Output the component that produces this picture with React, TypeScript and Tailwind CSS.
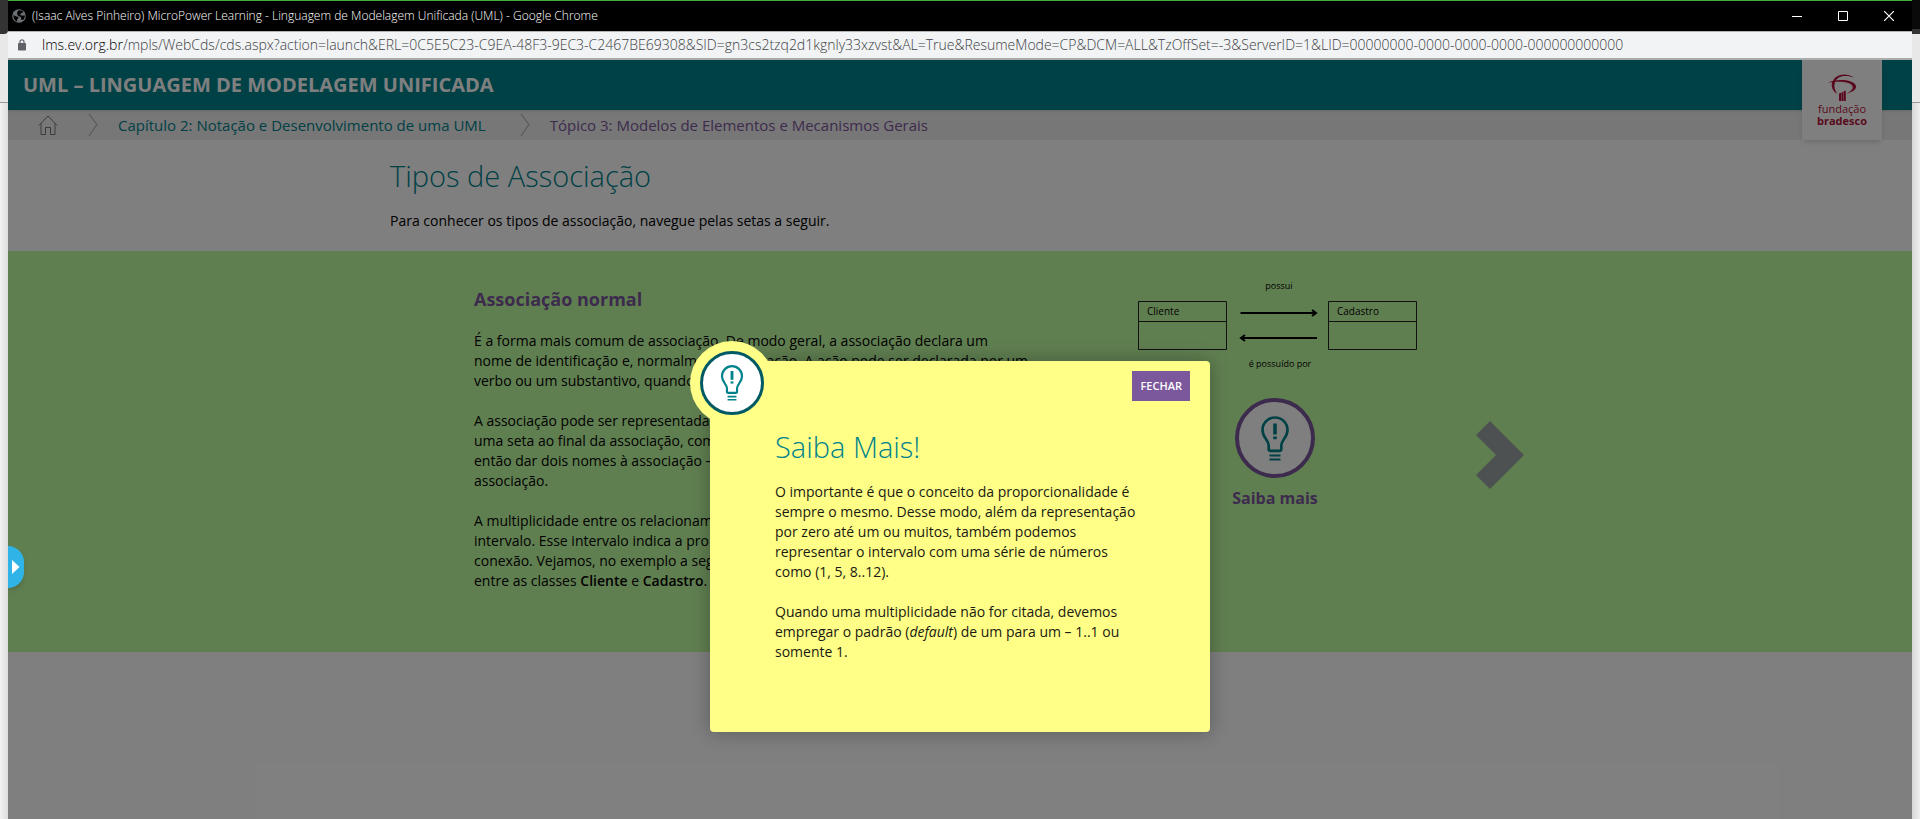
import { ReactNode } from "react";

function BulbIcon({ className }: { className: string }) {
  return (
    <svg viewBox="0 0 28 45" fill="none" stroke="currentColor" className={className} aria-hidden="true">
      <path
        d="M14 1.500a12.500 12.500 0 0 1 12.500 12.500c0 8-6.200 9.500-6.200 15.500v3.500q0 1.800-1.800 1.800h-9q-1.800 0-1.800-1.800v-3.500C7.700 23.500 1.500 22 1.500 14A12.500 12.500 0 0 1 14 1.500z"
        strokeWidth="2.700"
        strokeLinejoin="round"
      />
      <path d="M14 7.500v11" strokeWidth="3.600" />
      <path d="M14 20.500v2.700" strokeWidth="3.600" />
      <path d="M8.500 39.500h11M8.500 43.500h11" strokeWidth="2" />
    </svg>
  );
}

function CrumbArrow() {
  return (
    <svg viewBox="0 0 10 24" className="h-6 w-2.5 shrink-0" fill="none" stroke="#a0a0a0" aria-hidden="true">
      <path d="M1 1l8 10.500L1 23" />
    </svg>
  );
}

function TitleBar() {
  return (
    <div className="flex h-8 items-center border-t border-b border-t-[#3fae3f] border-b-[#b0b0b0] bg-black pl-1 text-white">
      <svg viewBox="0 0 14 14" className="size-3.5 shrink-0" aria-hidden="true">
        <circle cx="7" cy="7" r="6.800" fill="#6b7075" />
        <path d="M1.600 6l2.400 1.500 2.500.2-.5 2-1 .5v2.500C2.500 11.500 1 9 1.600 6zM6 1.500h4l1.500 2-2 .2L8 6l3 .8 1.600-.5.2 1.700-1.600 3-2-.5L9 8 6 6.800 5 4.500z" fill="#000" />
      </svg>
      <h1 className="ml-1.5 grow truncate text-xs font-light text-white">
        (Isaac Alves Pinheiro) MicroPower Learning - Linguagem de Modelagem Unificada (UML) - Google Chrome
      </h1>
      <div className="flex h-full">
        <button type="button" aria-label="Minimizar" className="flex w-[46px] items-center justify-center">
          <svg viewBox="0 0 10 10" className="size-2.5" stroke="currentColor"><path d="M0 5.500h10" /></svg>
        </button>
        <button type="button" aria-label="Maximizar" className="flex w-[46px] items-center justify-center">
          <svg viewBox="0 0 10 10" className="size-2.5" fill="none" stroke="currentColor"><path d="M.5.5h9v9h-9z" /></svg>
        </button>
        <button type="button" aria-label="Fechar janela" className="flex w-[46px] items-center justify-center">
          <svg viewBox="0 0 10 10" className="size-2.5" stroke="currentColor" strokeWidth="1.200"><path d="M0 0l10 10M10 0L0 10" /></svg>
        </button>
      </div>
    </div>
  );
}

function AddressBar() {
  return (
    <div className="flex h-7 items-center border-b-2 border-[#ababab] bg-[#f1f3f4] pl-2.5 text-sm font-light text-[#3c4043]">
      <svg viewBox="0 0 8 12" className="h-3 w-2 shrink-0" aria-hidden="true">
        <rect x="0" y="4" width="8" height="7.500" rx=".8" fill="#5f6368" />
        <path d="M2 4.500V2.800a2 2 0 0 1 4 0v1.700" fill="none" stroke="#5f6368" strokeWidth="1.200" />
      </svg>
      <span className="ml-4 truncate">
        <span className="text-black">lms.ev.org.br</span>
        /mpls/WebCds/cds.aspx?action=launch&amp;ERL=0C5E5C23-C9EA-48F3-9EC3-C2467BE69308&amp;SID=gn3cs2tzq2d1kgnly33xzvst&amp;AL=True&amp;ResumeMode=CP&amp;DCM=ALL&amp;TzOffSet=-3&amp;ServerID=1&amp;LID=00000000-0000-0000-0000-000000000000
      </span>
    </div>
  );
}

function Logo() {
  return (
    <div className="absolute top-0 right-[30px] flex size-20 flex-col items-center bg-white pt-[13px] text-[#b4143c] shadow-md">
      <svg viewBox="0 0 30 30" className="size-[30px] shrink-0" aria-hidden="true">
        <path d="M5.500 10C7 1 19-1 27 4.500 20 2 11 2 8 9z" fill="currentColor" />
        <path d="M1 9.800C8 5.500 27 6 29 13c.5 4-4 6.200-9.500 7.500 4-2 7-4.500 6-7.500C23 8.500 10 8 1 9.800z" fill="currentColor" />
        <path d="M5.500 8c-2 5 0 10.500 5 12.800-3-4-4-8-2-12.800z" fill="currentColor" />
        <path d="M12 20.500l2-.8V28h-2zM14.400 19.500l2-.8V28h-2zM16.800 18.300l2-.8V28h-2z" fill="currentColor" />
      </svg>
      <span className="text-center text-[11px] leading-3">
        fundação
        <br />
        <b>bradesco</b>
      </span>
    </div>
  );
}

function Header() {
  return (
    <header>
      <div className="relative z-10 flex h-[50px] items-center bg-[#00828c] pl-[15px] text-white shadow">
        <h2 className="text-xl font-bold">UML – LINGUAGEM DE MODELAGEM UNIFICADA</h2>
        <Logo />
      </div>
      <nav className="flex h-[30px] items-center bg-[#eeeeee] pl-[30px] text-[15px]">
        <a href="#inicio" aria-label="Início">
          <svg viewBox="0 0 20 20" className="size-5" fill="none" stroke="#777" aria-hidden="true">
            <path d="M.8 10.500L10 1l9.200 9.500M3 8.500v11h4.500V12.500h5v7H17v-11" />
          </svg>
        </a>
        <span className="ml-[30px] flex items-center"><CrumbArrow /></span>
        <a href="#capitulo-2" className="ml-5 text-[#00828c]">Capítulo 2: Notação e Desenvolvimento de uma UML</a>
        <span className="ml-[34px] flex items-center"><CrumbArrow /></span>
        <a href="#topico-3" className="ml-5 text-[#7b579b]">Tópico 3: Modelos de Elementos e Mecanismos Gerais</a>
      </nav>
    </header>
  );
}

function AssociationDiagram() {
  return (
    <svg viewBox="0 -10 290 110" className="h-[110px] w-[290px]" role="img" aria-label="Cliente possui Cadastro" fontFamily="'Open Sans', sans-serif">
      <g fill="none" stroke="#222">
        <path d="M6.500 20.500h88v48h-88zM6.500 40.500h88M196.500 20.500h88v48h-88zM196.500 40.500h88" />
      </g>
      <g stroke="#000" strokeWidth="2" fill="none">
        <path d="M108.500 32h75M180 29l4 3-4 3M185 57h-75M113 54l-4 3 4 3" />
      </g>
      <text x="147" y="8" textAnchor="middle" fontSize="9">possui</text>
      <text x="15" y="34" fontSize="10">Cliente</text>
      <text x="205" y="34" fontSize="10">Cadastro</text>
      <text x="148" y="86" textAnchor="middle" fontSize="9">é possuído por</text>
    </svg>
  );
}

function Lines({ rows }: { rows: ReactNode[] }) {
  return (
    <p className="mt-5">
      {rows.map((row, i) => (
        <span key={i} className="block whitespace-nowrap">{row}</span>
      ))}
    </p>
  );
}

function Lesson() {
  return (
    <main>
      <div className="mx-auto max-w-[1140px] pt-[18px] pb-5">
        <h3 className="text-[29px] leading-9 font-light text-[#00828c]">Tipos de Associação</h3>
        <p className="mt-[17px] text-sm">Para conhecer os tipos de associação, navegue pelas setas a seguir.</p>
      </div>
      <section className="bg-[#c0fea2]">
        <div className="mx-auto flex h-[401px] max-w-[1140px] pl-[84px]">
          <article className="w-[568px] shrink-0 pt-9 text-sm leading-5">
            <h4 className="text-lg leading-6 font-bold text-[#7b579b]">Associação normal</h4>
            <Lines
              rows={[
                "É a forma mais comum de associação. De modo geral, a associação declara um",
                "nome de identificação e, normalmente, uma ação. A ação pode ser declarada por um",
                "verbo ou um substantivo, quando",
              ]}
            />
            <Lines
              rows={[
                "A associação pode ser representada",
                "uma seta ao final da associação, com",
                "então dar dois nomes à associação –",
                "associação.",
              ]}
            />
            <Lines
              rows={[
                "A multiplicidade entre os relacionam",
                "intervalo. Esse intervalo indica a pro",
                "conexão. Vejamos, no exemplo a seg",
                <>entre as classes <b className="font-semibold">Cliente</b> e <b className="font-semibold">Cadastro</b>.</>,
              ]}
            />
          </article>
          <div className="ml-[90px] flex w-[290px] shrink-0 flex-col items-center pt-5">
            <AssociationDiagram />
            <button type="button" className="mt-[17px] mr-1 flex flex-col items-center">
              <span className="flex size-20 items-center justify-center rounded-full border-4 border-[#7b579b] bg-white text-[#00828c]">
                <BulbIcon className="h-[45px] w-7" />
              </span>
              <span className="mt-2 text-base font-bold text-[#7b579b]">Saiba mais</span>
            </button>
          </div>
          <button type="button" aria-label="Próximo" className="ml-[52px] flex pt-[169px]">
            <svg viewBox="0 0 50 70" className="h-[70px] w-[50px]" aria-hidden="true">
              <path d="M2 15L16 1l34 34-34 34-14-14 20-20z" fill="#9ba3a3" />
            </svg>
          </button>
        </div>
      </section>
    </main>
  );
}

function Dialog() {
  return (
    <div role="dialog" aria-labelledby="dialog-title" className="relative h-[371px] w-[500px] rounded bg-[#ffff88] px-[65px] pt-[68px] shadow-[0_0_20px_rgba(0,0,0,0.3)]">
      <div className="absolute -top-5 -left-5 flex size-[84px] items-center justify-center rounded-full bg-[#ffff88]">
        <span className="flex size-16 items-center justify-center rounded-full border-3 border-[#005a64] bg-white text-[#00828c]">
          <BulbIcon className="h-9 w-6" />
        </span>
      </div>
      <button type="button" className="absolute top-2.5 right-5 h-[30px] bg-[#7b579b] px-2 text-[11px] font-semibold text-white">
        FECHAR
      </button>
      <h3 id="dialog-title" className="text-[29px] leading-9 font-light text-[#00828c]">Saiba Mais!</h3>
      <div className="mt-[17px] text-sm leading-5 text-[#1a1a10]">
        <p>
          O importante é que o conceito da proporcionalidade é sempre o mesmo. Desse modo, além da representação por
          zero até um ou muitos, também podemos representar o intervalo com uma série de números como (1, 5, 8..12).
        </p>
        <p className="mt-5">
          Quando uma multiplicidade não for citada, devemos empregar o padrão (<i>default</i>) de um para um – 1..1 ou
          somente 1.
        </p>
      </div>
    </div>
  );
}

function Backdrop({ side }: { side: "left" | "right" }) {
  return (
    <div className="flex w-2 shrink-0 flex-col">
      <div className={side === "left" ? "h-[34px] rounded-br bg-[#333]" : "h-[34px] border-b-5 border-[#333] bg-[#0a0a0a]"} />
      <div className="h-[69px] border-b border-[#999] bg-[#e8e8e8]" />
      <div className={side === "left" ? "grow bg-linear-to-r from-[#f2f2f2] to-[#dcdcdc]" : "grow bg-linear-to-l from-[#efefef] to-[#d8d8d8]"} />
    </div>
  );
}

export default function App() {
  return (
    <div className="flex min-h-screen bg-[#e8e8e8] font-['Open_Sans',sans-serif] text-black">
      <Backdrop side="left" />
      <div className="flex min-w-0 grow flex-col">
        <TitleBar />
        <AddressBar />
        <div className="relative grow overflow-hidden bg-white">
          <Header />
          <Lesson />
          <div className="absolute inset-0 z-20 flex items-start justify-center bg-black/50 pt-[301px]">
            <Dialog />
          </div>
          <button
            type="button"
            aria-label="Abrir menu"
            className="absolute top-[486px] left-0 z-30 flex h-[42px] w-4 items-center justify-center rounded-r-full bg-[#30b4e8] shadow-md"
          >
            <svg viewBox="0 0 8 14" className="h-3.5 w-2" aria-hidden="true"><path d="M0 0l7.500 7L0 14z" fill="#fff" /></svg>
          </button>
        </div>
      </div>
      <Backdrop side="right" />
    </div>
  );
}
